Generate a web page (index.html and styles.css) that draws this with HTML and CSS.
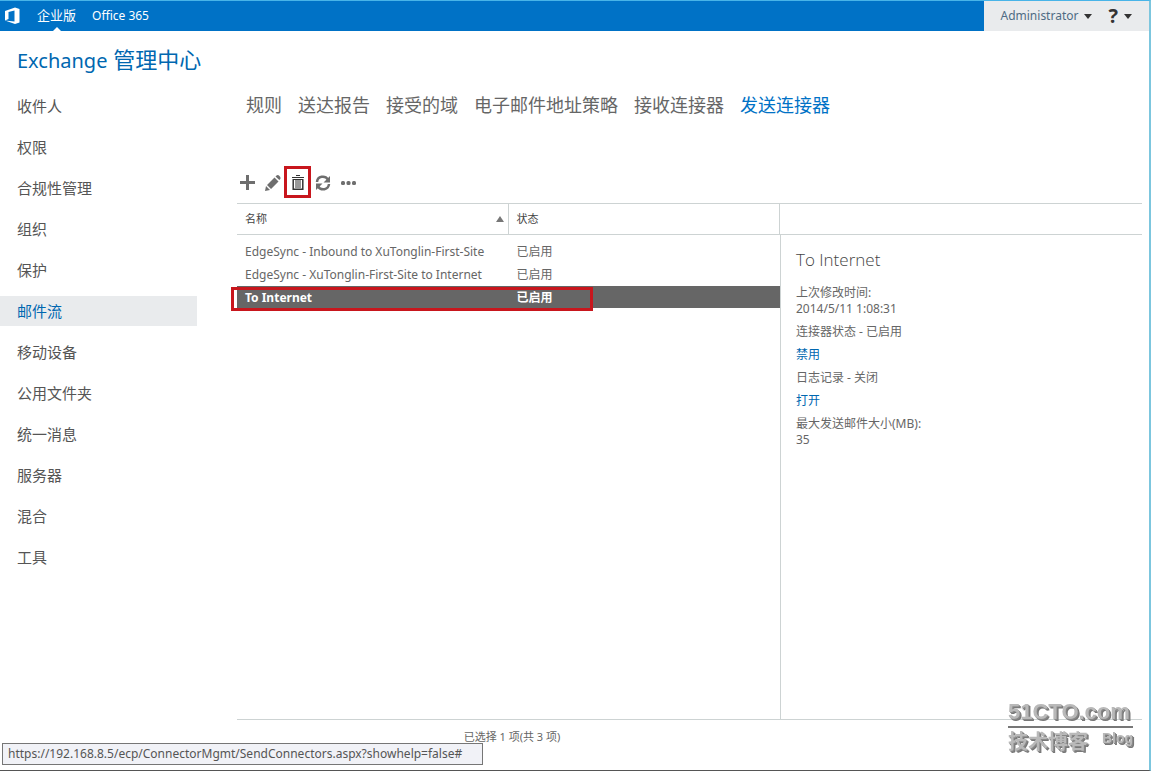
FILE: index.html
```
<!DOCTYPE html>
<html lang="zh-CN">
<head>
<meta charset="utf-8">
<title>Exchange 管理中心</title>
<link rel="stylesheet" href="styles.css">
</head>
<body>
<header class="topbar">
  <nav class="suite">
    <a class="logo" href="#" aria-label="Office">
      <svg width="16" height="18" viewBox="0 0 16 18"><path fill="#fff" fill-rule="evenodd" d="M0 4 10 0.500l4.500 1.500v13.500L10 17 0 13.500l9.500 1V3.500L3.500 5v7L0 13.500z"/></svg>
    </a>
    <a class="suite-link current" href="#">企业版</a>
    <a class="suite-link" href="#">Office 365</a>
  </nav>
  <div class="account">
    <button class="user" type="button">Administrator <span class="caret"></span></button>
    <button class="help" type="button" aria-label="帮助"><b>?</b> <span class="caret"></span></button>
  </div>
</header>
<h1 class="title"><span class="latin">Exchange</span> 管理中心</h1>
<div class="body">
  <nav class="side">
    <a href="#">收件人</a>
    <a href="#">权限</a>
    <a href="#">合规性管理</a>
    <a href="#">组织</a>
    <a href="#">保护</a>
    <a href="#" class="active">邮件流</a>
    <a href="#">移动设备</a>
    <a href="#">公用文件夹</a>
    <a href="#">统一消息</a>
    <a href="#">服务器</a>
    <a href="#">混合</a>
    <a href="#">工具</a>
  </nav>
  <main class="main">
    <nav class="tabs">
      <a href="#">规则</a>
      <a href="#">送达报告</a>
      <a href="#">接受的域</a>
      <a href="#">电子邮件地址策略</a>
      <a href="#">接收连接器</a>
      <a href="#" class="active">发送连接器</a>
    </nav>
    <div class="toolbar">
      <button type="button" aria-label="新建"><svg width="16" height="16" viewBox="0 0 16 16"><path stroke="#6e6e6e" stroke-width="3" d="M7.500 0v15M0 7.500h15"/></svg></button>
      <button type="button" aria-label="编辑"><svg width="16" height="16" viewBox="0 0 16 16" fill="#6e6e6e"><path d="M0 16l1-5 4 4zM2 10l7.500-7.500 4 4L6 14zM10.500 1.500l1-1q1.500-1 3 .5t.8 3l-1 1z"/></svg></button>
      <button type="button" class="marked" aria-label="删除"><svg width="16" height="16" viewBox="0 0 16 16" fill="none" stroke="#333"><path d="M6 .5h4"/><path d="M2 2.500h12"/><path stroke-width="1.500" d="M3.200 5v9.200h9.600V5"/><path d="M2.500 4.500h11M6 5v8M8 5v8M10 5v8"/></svg></button>
      <button type="button" aria-label="刷新"><svg width="16" height="16" viewBox="0 0 16 16" fill="none" stroke="#6e6e6e" stroke-width="2.500"><path d="M2 7c.5-6 8-7 11-2.500M14 9c-.5 6-8 7-11 2.500"/><path fill="#6e6e6e" stroke="none" d="M15 1v6.500H8.500zM1 15V8.500h6.500z"/></svg></button>
      <button type="button" aria-label="更多"><svg width="16" height="16" viewBox="0 0 16 16" fill="#6e6e6e"><rect x="1" y="6" width="4" height="4" rx="1.500"/><rect x="6.500" y="6" width="4" height="4" rx="1.500"/><rect x="12" y="6" width="4" height="4" rx="1.500"/></svg></button>
    </div>
    <div class="panes">
      <section class="list">
        <table>
          <thead>
            <tr><th><div class="sort">名称 <span class="up"></span></div></th><th>状态</th></tr>
          </thead>
          <tbody>
            <tr class="space"><td colspan="2"></td></tr>
            <tr><td>EdgeSync - Inbound to XuTonglin-First-Site</td><td>已启用</td></tr>
            <tr><td>EdgeSync - XuTonglin-First-Site to Internet</td><td>已启用</td></tr>
            <tr class="selected"><td><span class="mark"></span>To Internet</td><td>已启用</td></tr>
          </tbody>
        </table>
      </section>
      <section class="details">
        <div class="details-head"></div>
        <div class="details-body">
          <h2>To Internet</h2>
          <p>上次修改时间:<br>2014/5/11 1:08:31</p>
          <p>连接器状态 - 已启用</p>
          <p><a href="#">禁用</a></p>
          <p>日志记录 - 关闭</p>
          <p><a href="#">打开</a></p>
          <p>最大发送邮件大小(MB):<br>35</p>
        </div>
      </section>
    </div>
    <footer class="count">已选择 1 项(共 3 项)</footer>
  </main>
</div>
<div class="linkhint">https://192.168.8.5/ecp/ConnectorMgmt/SendConnectors.aspx?showhelp=false#</div>
<div class="watermark">
  <div class="wm-top">51CTO.com</div>
  <div class="wm-bottom"><span class="wm-cn">技术博客</span><span class="wm-en">Blog</span></div>
</div>
</body>
</html>
```
FILE: styles.css
```
* { box-sizing: border-box; }
body {
  margin: 0;
  min-height: 100vh;
  display: flex;
  flex-direction: column;
  background: #fff;
  border-top: 1px solid #48b4e8;
  border-right: 2px solid #7cc6de;
  border-bottom: 1px solid #555;
  font: 12px/16px "Noto Sans", "Noto Sans CJK SC", sans-serif;
  color: #666;
}
a { color: #0067b0; text-decoration: none; }
button { border: 0; padding: 0; background: none; font: inherit; color: inherit; }

.topbar { display: flex; justify-content: space-between; height: 30px; background: #0072c6; }
.suite { display: flex; align-items: stretch; gap: 16px; padding-left: 5px; }
.logo { display: flex; align-items: center; }
.suite-link { position: relative; color: #fff; font-size: 13px; line-height: 29px; }
.suite-link:last-child { font-size: 12px; }
.suite-link.current::after {
  content: "";
  position: absolute;
  left: 50%;
  bottom: 0;
  margin-left: -4px;
  border: 4px solid transparent;
  border-top: 0;
  border-bottom-color: #fff;
}
.account {
  display: flex;
  align-items: center;
  gap: 16px;
  padding: 0 17px;
  background: #e9ebed;
  color: #4f6b84;
}
.account button { display: flex; align-items: center; gap: 6px; }
.help b { font: bold 20px/20px "Open Sans", sans-serif; color: #333; }
.caret { border: 4px solid transparent; border-top: 5px solid #333; border-bottom: 0; }

.title { margin: 13px 0 0 17px; font-size: 22px; line-height: 30px; font-weight: 400; color: #0067b0; }
.title .latin { font-size: 20px; }

.body { flex: 1; display: flex; }
.side { width: 197px; padding-top: 15px; display: flex; flex-direction: column; gap: 11px; }
.side a { padding-left: 17px; font-size: 15px; line-height: 30px; color: #555; }
.side .active { background: #e9ebed; color: #0067b0; }

.main { flex: 1; display: flex; flex-direction: column; margin-left: 40px; padding-right: 7px; }
.tabs { display: flex; gap: 16px; padding: 17px 0 0 9px; font-size: 18px; line-height: 24px; }
.tabs a { color: #666; }
.tabs .active { color: #0072c6; }
.toolbar { display: flex; gap: 9px; padding: 58px 0 12px 3px; }
.toolbar button { position: relative; display: flex; }
.marked::after {
  content: "";
  position: absolute;
  inset: -9px -5px -7px -6px;
  border: 3px solid #c8161d;
}

.panes { flex: 1; display: grid; grid-template-columns: 3fr 2fr; border-bottom: 1px solid #cdd3d3; }
table { width: 100%; table-layout: fixed; border-spacing: 0; }
th, td { padding: 0 8px; text-align: left; font-weight: 400; }
th { height: 32px; border: 1px solid #cdd3d3; border-left: 0; color: #444; font-size: 11px; }
.sort { display: flex; justify-content: space-between; align-items: center; margin-right: -4px; }
.up { border: 4px solid transparent; border-bottom: 6px solid #777; border-top: 0; }
.space td { height: 5px; padding: 0; }
tbody tr:not(.space) td {
  height: 23px;
  padding-top: 1px;
  position: relative;
  border-bottom: 1px solid transparent;
  background-clip: padding-box;
}
.selected td { background-color: #666; color: #fff; font-weight: 700; }
.mark {
  position: absolute;
  left: -6px;
  top: 1px;
  width: 362px;
  height: 24px;
  border: 3px solid #c8161d;
  z-index: 1;
}
/* light gap between the frame and the start of the row */
.mark::before {
  content: "";
  position: absolute;
  left: 0;
  top: 0;
  bottom: 0;
  width: 3px;
  background: #fff;
}
.details { display: flex; flex-direction: column; }
.details-head { height: 32px; border: solid #cdd3d3; border-width: 1px 0; }
.details-body { flex: 1; padding: 14px 15px; border-left: 1px solid #cdd3d3; }
h2 { margin: 0 0 14px; font: 300 17px/22px "Open Sans", sans-serif; color: #444; }
p { margin: 0 0 7px; }
.count { width: 60%; height: 50px; padding: 9px 0 0 7px; text-align: center; font-size: 11px; }

.linkhint {
  position: fixed;
  left: 2px;
  bottom: 6px;
  padding: 2px 20px 2px 5px;
  border: 1px solid #767676;
  background: #f1f2f7;
  color: #555;
  font-size: 12px;
  line-height: 16px;
}
.watermark {
  position: fixed;
  right: 18px;
  bottom: 17px;
  width: 125px;
  color: #b9b9b9;
  text-shadow: 1px 1px 0 #888, 2px 2px 0 #777;
}
.wm-top { font: bold 22px/28px "Liberation Sans", sans-serif; border-bottom: 2px solid #777; }
.wm-bottom { display: flex; justify-content: space-between; }
.wm-cn { font: bold 20px/26px "Noto Sans CJK SC", sans-serif; }
.wm-en { font: bold 14px/20px "Liberation Sans", sans-serif; }
```
